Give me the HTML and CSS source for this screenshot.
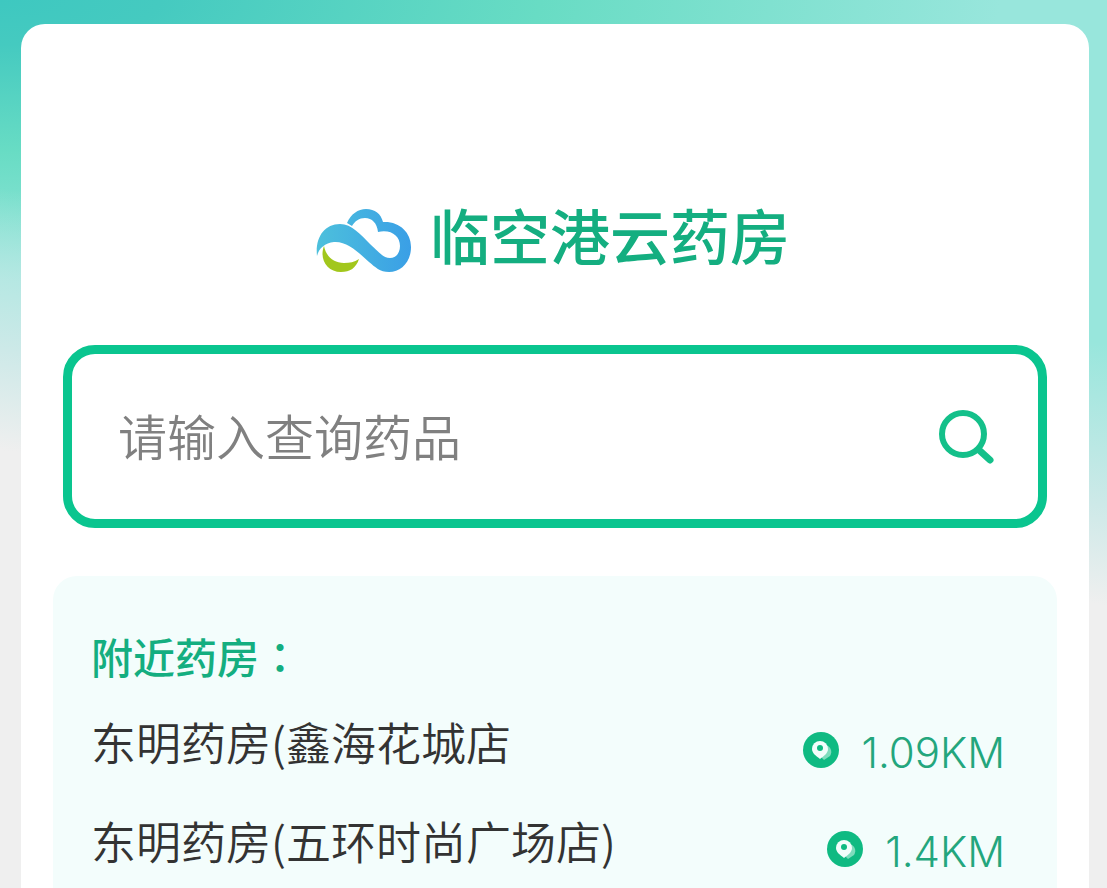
FILE: index.html
```html
<!DOCTYPE html>
<html lang="zh-CN">
<head>
<meta charset="utf-8">
<meta name="viewport" content="width=device-width, initial-scale=1">
<title>临空港云药房</title>
<link rel="stylesheet" href="styles.css">
</head>
<body>
<svg width="0" height="0" class="defs" aria-hidden="true">
  <symbol id="pin" viewBox="0 0 36 36">
    <circle cx="18" cy="18" r="18" fill="#0fba82"/>
    <path d="M22 13a7 7 0 0 1 5 11l-6 4-4-4z" fill="#7fdcbd"/>
    <path d="M17 9a8 8 0 0 1 8 8c0 4-4 7-8 10-4-3-8-6-8-10a8 8 0 0 1 8-8z" fill="#f2fdfb"/>
    <circle cx="17" cy="16" r="3" fill="#0fba82"/>
  </symbol>
</svg>
<main class="card">
  <header class="brand">
    <svg class="logo" viewBox="0 0 96 66" aria-hidden="true">
      <defs>
        <linearGradient id="sky" x1="0" y1="0" x2="1" y2="0">
          <stop offset="0" stop-color="#4dc0dc"/>
          <stop offset="1" stop-color="#3a9fe6"/>
        </linearGradient>
      </defs>
      <path fill="url(#sky)" d="M31 15C35 6 42 1 50 1C59 1 65 6 67 14C83 13 95 24 95 39C95 54 85 64 73 64C64 64 59 59 53 54C42 44 31 33 18 34C9 35 3 40 1 48C-1 30 8 16 24 16C36 16 45 27 54 36C63 44 67 50 74 50C80 50 84 45 84 38C84 28 75 21 62 24C61 15 56 10 49 10C43 10 39 13 36 18Z"/>
      <path fill="#a2c71c" d="M8 38C3 51 11 64 25 64C34 64 40 60 43 51C38 54 34 55 28 55C17 55 10 48 8 38Z"/>
    </svg>
    <h1 class="title">临空港云药房</h1>
  </header>
  <form class="search">
    <input class="search-input" type="text" placeholder="请输入查询药品" aria-label="请输入查询药品">
    <button class="search-button" type="button" aria-label="查询">
      <svg class="search-icon" viewBox="0 0 56 56" fill="none" stroke="#14c08a" aria-hidden="true">
        <circle cx="25" cy="25" r="21" stroke-width="6"/>
        <path d="M41 41L52 51" stroke-width="7" stroke-linecap="round"/>
      </svg>
    </button>
  </form>
  <section class="nearby">
    <h2 class="nearby-title">附近药房<span class="colon" lang="zh-TW">：</span></h2>
    <ul class="stores">
      <li class="store">
        <span class="name">东明药房(鑫海花城店</span>
        <span class="distance"><svg class="pin" aria-hidden="true"><use href="#pin"/></svg><span class="value">1.09KM</span></span>
      </li>
      <li class="store">
        <span class="name">东明药房(五环时尚广场店)</span>
        <span class="distance"><svg class="pin" aria-hidden="true"><use href="#pin"/></svg><span class="value">1.4KM</span></span>
      </li>
    </ul>
  </section>
</main>
</body>
</html>
```
FILE: styles.css
```css
* { box-sizing: border-box; }

body {
  margin: 0;
  min-height: 100vh;
  padding: 24px 18px 0 21px;
  display: flex;
  font-family: "Noto Sans CJK SC", sans-serif;
  background:
    linear-gradient(188deg, rgba(239, 239, 239, 0) 340px, #cde9e8 500px, #efefef 600px),
    radial-gradient(ellipse 1000px 280px at 0 0, #3ec8c0, #45cac0 16%, #68dcc4 54%, #98e6dc) #98e6dc;
}

.defs { position: absolute; }

.card {
  display: flex;
  flex-direction: column;
  flex: 1;
  min-width: 0;
  padding: 166px 32px 0;
  border-radius: 24px 24px 0 0;
  background: #fff;
}

.brand {
  display: flex;
  align-items: flex-start;
  justify-content: center;
  gap: 18px;
  padding-right: 4px;
}

.logo { width: 96px; height: 66px; margin-top: 18px; }

.title {
  margin: 0;
  font-size: 60px;
  line-height: 88px;
  font-weight: 500;
  color: #14ae80;
}

.search {
  display: flex;
  align-items: center;
  height: 183px;
  margin: 67px 10px 48px;
  padding: 0 44px 0 46px;
  border: 9px solid #0ac58f;
  border-radius: 32px;
}

.search-input {
  flex: 1;
  min-width: 0;
  height: 72px;
  padding: 0 0 4px;
  border: 0;
  outline: 0;
  background: none;
  font: 350 49px "Noto Sans CJK SC", sans-serif;
  color: #333;
}

.search-input::placeholder { color: #808080; opacity: 1; }

.search-button {
  padding: 0;
  border: 0;
  background: none;
}

.search-icon { display: block; width: 56px; height: 56px; }

.nearby {
  flex: 1;
  padding: 48px 52px 0 38px;
  border-radius: 24px 24px 0 0;
  background: #f3fdfc;
}

.nearby-title {
  margin: 0;
  font-size: 42px;
  line-height: 64px;
  font-weight: 500;
  color: #14ae80;
}

.colon { font-family: "Noto Sans CJK TC", sans-serif; }

.stores {
  display: grid;
  gap: 19px;
  margin: 0;
  padding: 14px 0 0;
  list-style: none;
}

.store {
  display: flex;
  justify-content: space-between;
  align-items: center;
  height: 80px;
}

.name {
  font-size: 45px;
  line-height: 64px;
  font-weight: 350;
  color: #333;
}

.distance {
  display: flex;
  align-items: center;
  gap: 22px;
  padding-top: 16px;
  font: 300 42px Inter, sans-serif;
  color: #23a67d;
}

.value { padding-top: 4px; }

.pin { width: 36px; height: 36px; }
```
